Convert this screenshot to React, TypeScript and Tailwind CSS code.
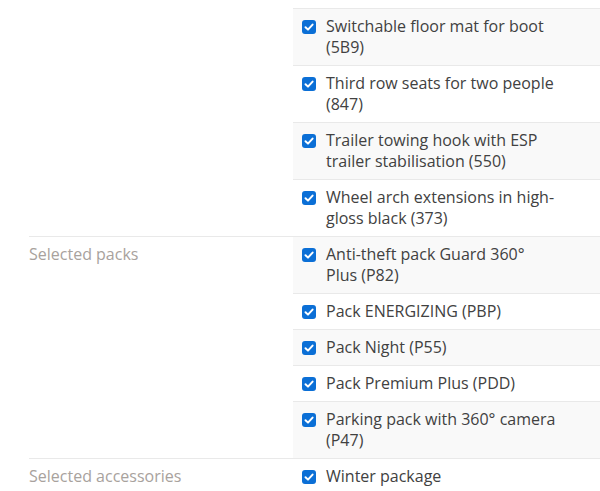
import React from 'react';

type Item = { lines: string[] };
type Group = { label: string; items: Item[] };

const groups: Group[] = [
  {
    label: 'Selected options',
    items: [
      { lines: ['Roof rails in silver', 'Sunset glazing (PG4)'] },
      { lines: ['Switchable floor mat for boot', '(5B9)'] },
      { lines: ['Third row seats for two people', '(847)'] },
      { lines: ['Trailer towing hook with ESP', 'trailer stabilisation (550)'] },
      { lines: ['Wheel arch extensions in high-', 'gloss black (373)'] },
    ],
  },
  {
    label: 'Selected packs',
    items: [
      { lines: ['Anti-theft pack Guard 360°', 'Plus (P82)'] },
      { lines: ['Pack ENERGIZING (PBP)'] },
      { lines: ['Pack Night (P55)'] },
      { lines: ['Pack Premium Plus (PDD)'] },
      { lines: ['Parking pack with 360° camera', '(P47)'] },
    ],
  },
  {
    label: 'Selected accessories',
    items: [{ lines: ['Winter package'] }],
  },
];

function CheckRow({ item, shaded, last }: { item: Item; shaded: boolean; last: boolean }) {
  return (
    <div
      className={`flex items-start pl-[9px] pr-[24px] py-[7px] ${shaded ? 'bg-[#f9f9f9]' : 'bg-white'} ${
        last ? '' : 'border-b border-[#e9e9e9]'
      }`}
    >
      <span className="mt-[4px] flex h-[14px] w-[14px] shrink-0 items-center justify-center rounded-[3px] bg-[#0b6fd6]">
        <svg viewBox="0 0 14 14" className="h-[14px] w-[14px]">
          <path d="M3.5 7.2 L6 9.6 L10.6 4.6" fill="none" stroke="white" strokeWidth="2" strokeLinecap="round" strokeLinejoin="round" />
        </svg>
      </span>
      <p className="ml-[10px] text-[16px] leading-[21px] text-[#414141]">
        {item.lines.map((line, i) => (
          <React.Fragment key={i}>
            {i > 0 && <br />}
            {line}
          </React.Fragment>
        ))}
      </p>
    </div>
  );
}

export default function App() {
  let rowIndex = 0;

  return (
    <div className="h-[491px] w-[600px] overflow-hidden bg-white pl-[29px] font-['Open_Sans',sans-serif]">
      <div className="-mt-[48px]">
        {groups.map((group) => (
          <div key={group.label} className="flex border-b border-[#e9e9e9]">
            <div className="w-[264px] shrink-0 py-[7px] text-[16px] leading-[21px] text-[#a8a29d]">
              {group.label}
            </div>
            <div className="flex-1">
              {group.items.map((item, i) => {
                const shaded = rowIndex % 2 === 1;
                rowIndex++;
                return (
                  <CheckRow
                    key={item.lines.join(' ')}
                    item={item}
                    shaded={shaded}
                    last={i === group.items.length - 1}
                  />
                );
              })}
            </div>
          </div>
        ))}
      </div>
    </div>
  );
}
